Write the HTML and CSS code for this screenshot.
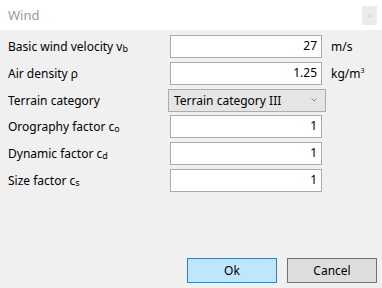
FILE: index.html
```html
<!DOCTYPE html>
<html lang="en">
<head>
    <meta charset="UTF-8">
    <title>Wind</title>
    <link rel="stylesheet" href="styles.css">
</head>
<body>
    <div class="window">
        <div class="titlebar">
            <span class="title">Wind</span>
            <div class="close-btn">&#215;</div>
        </div>

        <div class="content">
            <div class="form">
                <label>Basic wind velocity v<sub>b</sub></label>
                <div class="field">27</div>
                <span class="unit">m/s</span>

                <label>Air density ρ</label>
                <div class="field">1.25</div>
                <span class="unit">kg/m<sup>3</sup></span>

                <label>Terrain category</label>
                <div class="combo">
                    <span>Terrain category III</span>
                    <svg width="6" height="4" viewBox="0 0 6 4"><path d="M0.5 0.5 L3 3 L5.5 0.5" fill="none" stroke="#8a8a8a" stroke-width="1"/></svg>
                </div>
                <span class="unit"></span>

                <label>Orography factor c<sub>o</sub></label>
                <div class="field">1</div>
                <span class="unit"></span>

                <label>Dynamic factor c<sub>d</sub></label>
                <div class="field">1</div>
                <span class="unit"></span>

                <label>Size factor c<sub>s</sub></label>
                <div class="field">1</div>
                <span class="unit"></span>
            </div>

            <div class="buttons">
                <button class="btn btn-ok">Ok</button>
                <button class="btn">Cancel</button>
            </div>
        </div>
    </div>
</body>
</html>
```

FILE: styles.css
```css
body {
    margin: 0;
    font-family: "Noto Sans", "Open Sans", sans-serif;
    font-size: 12px;
    color: #000;
    background: #f0f0f0;
}

.window {
    width: 382px;
    height: 288px;
    display: flex;
    flex-direction: column;
    overflow: hidden;
}

.titlebar {
    height: 30px;
    background: #fff;
    display: flex;
    align-items: center;
    justify-content: space-between;
    padding: 0 5px 0 8px;
    box-sizing: border-box;
}

.title {
    color: #9a9a9a;
    font-size: 13px;
}

.close-btn {
    width: 15px;
    height: 19px;
    background: #ececec;
    color: #cfcfcf;
    font-size: 9px;
    display: flex;
    align-items: center;
    justify-content: center;
}

.content {
    flex: 1;
    display: flex;
    flex-direction: column;
    justify-content: space-between;
    padding: 5px 5px 5px 8px;
}

.form {
    display: grid;
    grid-template-columns: 162px 152px 1fr;
    grid-auto-rows: 23px;
    row-gap: 3.8px;
    align-items: center;
}

.form label {
    white-space: nowrap;
}

sub {
    font-size: 9px;
    vertical-align: -1px;
}

sup {
    font-size: 7px;
    vertical-align: 5px;
}

.field {
    height: 23px;
    box-sizing: border-box;
    background: #fff;
    border: 1px solid #ababab;
    text-align: right;
    padding: 0 4px;
    line-height: 20px;
}

.unit {
    padding-left: 9px;
}

.combo {
    height: 23px;
    margin: 0 -4px 0 -2px;
    box-sizing: border-box;
    background: #e5e5e5;
    border: 1px solid #acacac;
    display: flex;
    align-items: center;
    justify-content: space-between;
    padding: 0 8px 0 5px;
}

.buttons {
    display: flex;
    justify-content: flex-end;
    gap: 10px;
}

.btn {
    width: 90px;
    height: 25px;
    font-family: inherit;
    font-size: 12px;
    background: #dddddd;
    border: 1px solid #707070;
    padding: 0;
}

.btn-ok {
    background: #bee6fd;
    border-color: #3c7fb1;
}
```
